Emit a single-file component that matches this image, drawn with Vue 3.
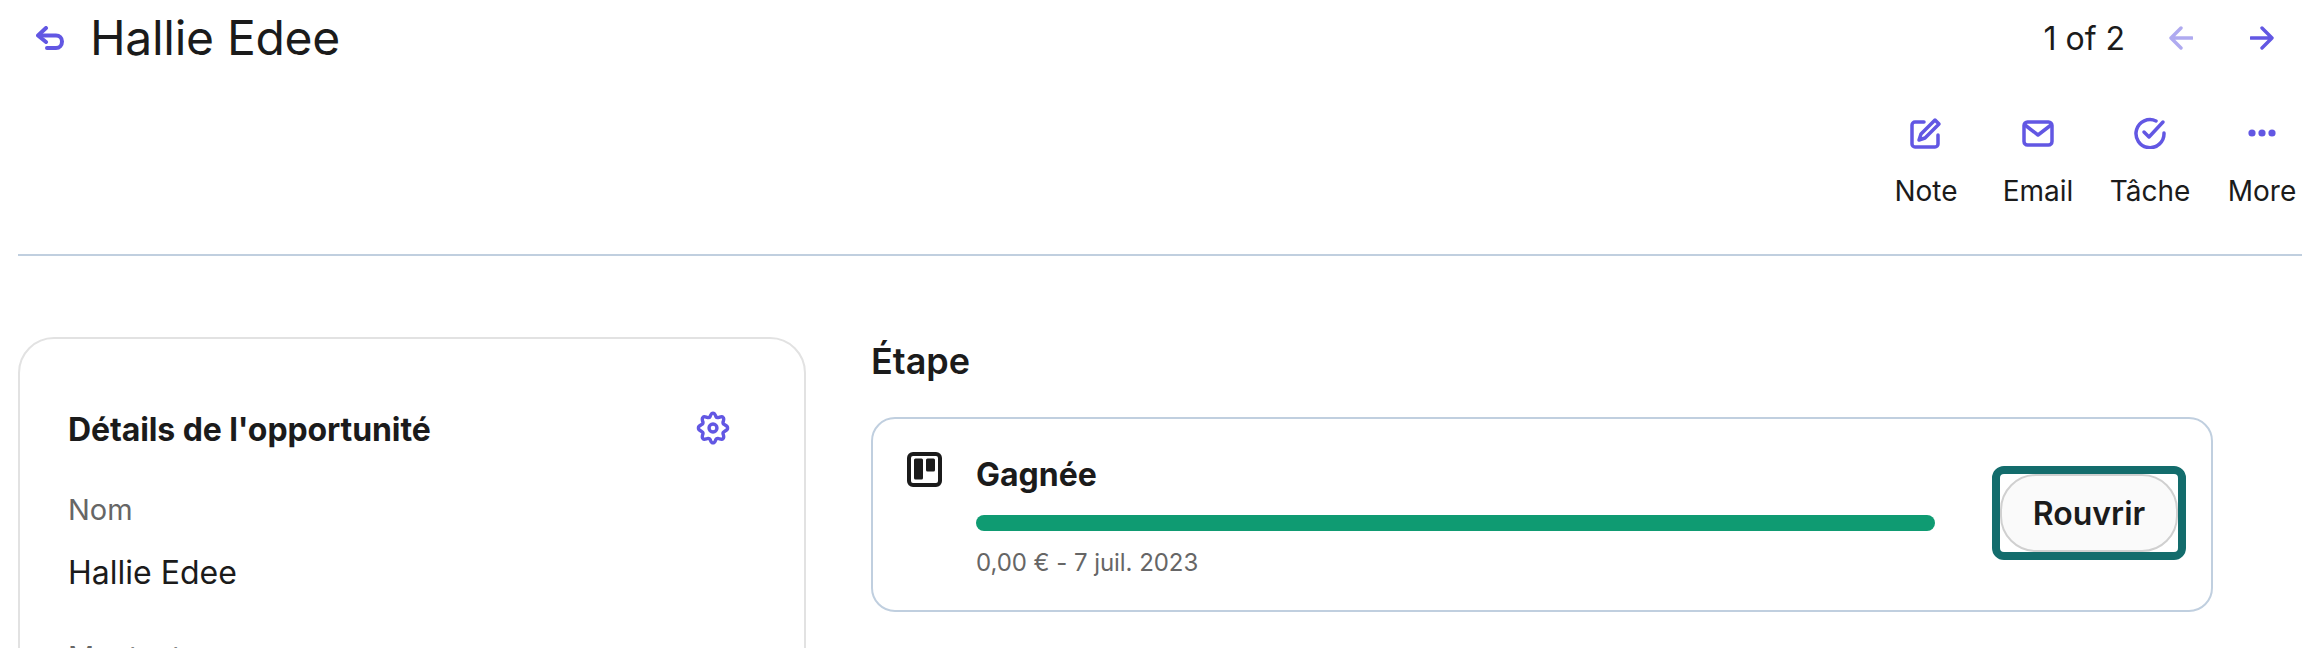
<script setup>
const actions = [
  { label: 'Note', key: 'note' },
  { label: 'Email', key: 'email' },
  { label: 'Tâche', key: 'task' },
  { label: 'More', key: 'more' },
]
</script>

<template>
  <div class="page">
    <header class="top">
      <div class="title-group">
        <svg class="back" viewBox="0 0 28 24" fill="none" stroke="#6257e3" stroke-width="4" stroke-linecap="round" stroke-linejoin="round">
          <path d="M10 2 2 9.500l8 6.500" />
          <path d="M3 9.500h17c3.500 0 6 2.400 6 6s-2.500 6.500-6 6.500h-9" />
        </svg>
        <h1>Hallie Edee</h1>
      </div>
      <div class="pager">
        <span>1 of 2</span>
        <svg class="arrow faded" viewBox="0 0 24 24" fill="none" stroke="#6257e3" stroke-width="3.400" stroke-linecap="round" stroke-linejoin="round">
          <path d="M12 2 2 12l10 10M2.500 12H23" />
        </svg>
        <svg class="arrow" viewBox="0 0 24 24" fill="none" stroke="#6257e3" stroke-width="3.400" stroke-linecap="round" stroke-linejoin="round">
          <path d="m12 2 10 10-10 10M21.500 12H1" />
        </svg>
      </div>
    </header>

    <div class="actions">
      <div v-for="a in actions" :key="a.key" class="action">
        <div class="action-icon">
          <svg v-if="a.key === 'note'" width="32" height="32" viewBox="0 0 32 32" fill="none" stroke="#6257e3" stroke-width="3.500" stroke-linecap="round" stroke-linejoin="round">
            <path d="M14 5H5a3 3 0 0 0-3 3v19a3 3 0 0 0 3 3h20a3 3 0 0 0 3-3v-9" />
            <path d="m25 3 4 4-14 14-6 2 2-6z" />
          </svg>
          <svg v-else-if="a.key === 'email'" width="32" height="27" viewBox="0 0 32 27" fill="none" stroke="#6257e3" stroke-width="3.500" stroke-linecap="round" stroke-linejoin="round">
            <rect x="2" y="2" width="28" height="23" rx="3.500" />
            <path d="m3 5 13 10L29 5" />
          </svg>
          <svg v-else-if="a.key === 'task'" width="32" height="32" viewBox="0 0 32 32" fill="none" stroke="#6257e3" stroke-width="3.500" stroke-linecap="round" stroke-linejoin="round">
            <path d="M22 4a14 14 0 1 0 8 12" />
            <path d="m10 15 5 5L29 5" />
          </svg>
          <svg v-else width="28" height="8" viewBox="0 0 28 8" fill="#6257e3">
            <circle cx="4" cy="4" r="3.600" />
            <circle cx="14" cy="4" r="3.600" />
            <circle cx="24" cy="4" r="3.600" />
          </svg>
        </div>
        <span class="action-label">{{ a.label }}</span>
      </div>
    </div>

    <div class="rule"></div>

    <main class="content">
      <section class="details">
        <div class="details-head">
          <h2>Détails de l'opportunité</h2>
          <svg class="gear" width="34" height="34" viewBox="0 0 24 24" fill="none" stroke="#6257e3" stroke-width="2.400" stroke-linecap="round" stroke-linejoin="round">
            <path d="M12 1.500c1.300 0 1.500 1.300 2 2.300.4.800 1.300 1 2.200.7 1-.3 2.100-.9 2.900 0 .9.900.4 2 .1 3-.3.900 0 1.700.8 2.100 1 .5 2.300.9 2.300 2.400s-1.300 1.900-2.300 2.400c-.8.400-1.100 1.200-.8 2.100.3 1 .8 2.100-.1 3-.8.900-1.900.3-2.900 0-.9-.3-1.800-.1-2.200.7-.5 1-.7 2.300-2 2.300s-1.500-1.300-2-2.300c-.4-.8-1.300-1-2.200-.7-1 .3-2.100.9-2.900 0-.9-.9-.4-2-.1-3 .3-.9 0-1.700-.8-2.100-1-.5-2.300-.9-2.300-2.400s1.300-1.900 2.300-2.400c.8-.4 1.100-1.200.8-2.100-.3-1-.8-2.100.1-3 .8-.9 1.900-.3 2.900 0 .9.300 1.800.1 2.200-.7.500-1 .7-2.300 2-2.300z" />
            <circle cx="12" cy="12" r="2.800" />
          </svg>
        </div>
        <div class="field-label">Nom</div>
        <div class="field-value">Hallie Edee</div>
        <div class="field-label next">Montant</div>
      </section>

      <section class="stage">
        <h2 class="stage-title">Étape</h2>
        <div class="stage-card">
          <svg class="stage-icon" width="35" height="35" viewBox="0 0 35 35">
            <rect x="2" y="2" width="31" height="31" rx="4" fill="none" stroke="#1b1b1b" stroke-width="4" />
            <rect x="7" y="6.500" width="9" height="21" rx="1.500" fill="#1b1b1b" />
            <rect x="19" y="6.500" width="9" height="13" rx="1.500" fill="#1b1b1b" />
          </svg>
          <div class="stage-body">
            <div class="stage-name">Gagnée</div>
            <div class="bar"></div>
            <div class="stage-meta">0,00 € - 7 juil. 2023</div>
          </div>
          <div class="focus-ring">
            <button class="reopen">Rouvrir</button>
          </div>
        </div>
      </section>
    </main>
  </div>
</template>

<style>
html, body { margin: 0; background: #fff; }
</style>

<style scoped>
.page {
  width: 2316px;
  height: 648px;
  overflow: hidden;
  box-sizing: border-box;
  padding: 0 14px 0 18px;
  font-family: Inter, "Liberation Sans", sans-serif;
  color: #1b1b1b;
  background: #fff;
}
.top {
  height: 76px;
  display: flex;
  align-items: center;
  justify-content: space-between;
}
.title-group { display: flex; align-items: center; }
.back { width: 28px; height: 24px; margin-left: 18px; margin-right: 26px; }
h1 { margin: 0; font-size: 48px; line-height: 76px; font-weight: 400; letter-spacing: -0.3px; }
.pager { display: flex; align-items: center; font-size: 32px; padding-right: 28px; }
.arrow { width: 24px; height: 24px; margin-left: 44px; }
.arrow.faded { opacity: 0.5; }
.arrow:last-child { margin-left: 57px; }

.actions {
  display: flex;
  justify-content: flex-end;
  gap: 46px;
  padding-right: 7px;
  margin-top: 40px;
}
.action { width: 66px; display: flex; flex-direction: column; align-items: center; }
.action-icon { height: 34px; display: flex; align-items: center; justify-content: center; }
.action-label { font-size: 28px; line-height: 34px; margin-top: 24px; white-space: nowrap; }

.rule { height: 2px; background: #c0cfdf; margin-top: 46px; }

.content { display: flex; align-items: flex-start; margin-top: 81px; }
.details {
  width: 788px;
  box-sizing: border-box;
  flex: none;
  padding: 70px 74px 0 48px;
  border: 2px solid #e2e2e2;
  border-radius: 36px;
  height: 400px;
}
.details-head { display: flex; align-items: center; justify-content: space-between; height: 40px; }
.details-head h2 { margin: 0; font-size: 32px; font-weight: 700; letter-spacing: -0.1px; }
.gear { margin-top: -2px; }
.field-label { font-size: 29px; line-height: 34px; color: #666; margin-top: 44px; }
.field-value { font-size: 32px; line-height: 38px; margin-top: 27px; }
.field-label.next { margin-top: 48px; }

.stage { margin-left: 65px; width: 1342px; }
.stage-title { margin: 0; font-size: 36px; line-height: 44px; font-weight: 600; padding-top: 2px; }
.stage-card {
  margin-top: 34px;
  height: 195px;
  box-sizing: border-box;
  border: 2px solid #c0cfdf;
  border-radius: 24px;
  display: flex;
  align-items: flex-start;
  padding: 33px 25px 0 34px;
}
.stage-icon { flex: none; margin-right: 34px; }
.stage-body { flex: 1; min-width: 0; margin-right: 57px; padding-top: 3px; }
.stage-name { font-size: 32px; line-height: 40px; font-weight: 700; }
.bar { height: 16px; border-radius: 8px; background: #0f9b72; margin-top: 20px; }
.stage-meta { font-size: 24px; line-height: 32px; color: #666; margin-top: 16px; letter-spacing: -0.05px; }
.focus-ring {
  flex: none;
  border: 8px solid #136c6c;
  border-radius: 12px;
  margin-top: 14px;
}
.reopen {
  display: block;
  width: 178px;
  height: 78px;
  box-sizing: border-box;
  background: #fafafa;
  border: 2px solid #d0d0d0;
  border-radius: 36px;
  font: 600 32px Inter, "Liberation Sans", sans-serif;
  color: #1b1b1b;
  padding: 0;
}
</style>
